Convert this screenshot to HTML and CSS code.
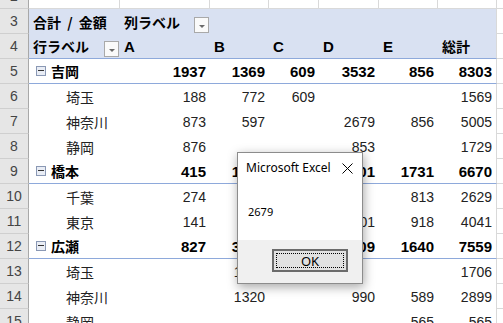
FILE: index.html
```
<!DOCTYPE html>
<html lang="ja">
<head>
  <meta charset="UTF-8">
  <title>ピボットテーブル</title>
  <link rel="stylesheet" href="styles.css">
</head>
<body>

<div class="sheet">
  <!-- 2 -->
  <div class="rh">2</div>
  <div class="gl"></div><div class="gl"></div><div class="gl"></div><div class="gl"></div>
  <div class="gl"></div><div class="gl"></div><div class="gl"></div><div class="gl last"></div>

  <!-- 3 -->
  <div class="rh">3</div>
  <div class="hd bold wide">合計 / 金額</div>
  <div class="hd bold split">列ラベル<span class="dd"></span></div>
  <div class="hd"></div><div class="hd"></div><div class="hd"></div><div class="hd"></div><div class="hd"></div>
  <div class="gl last"></div>

  <!-- 4 -->
  <div class="rh">4</div>
  <div class="hd bold line split">行ラベル<span class="dd"></span></div>
  <div class="hd head line">A</div>
  <div class="hd head line">B</div>
  <div class="hd head line">C</div>
  <div class="hd head line">D</div>
  <div class="hd head line">E</div>
  <div class="hd bold line">総計</div>
  <div class="gl last"></div>

  <!-- 5 -->
  <div class="rh">5</div>
  <div class="grp"><span class="minus"></span>吉岡</div>
  <div class="grp num">1937</div><div class="grp num">1369</div><div class="grp num">609</div>
  <div class="grp num">3532</div><div class="grp num">856</div><div class="grp num">8303</div>
  <div class="gl last"></div>

  <!-- 6 -->
  <div class="rh">6</div>
  <div class="item">埼玉</div>
  <div class="num">188</div><div class="num">772</div><div class="num">609</div>
  <div class="num"></div><div class="num"></div><div class="num">1569</div>
  <div class="gl last"></div>

  <!-- 7 -->
  <div class="rh">7</div>
  <div class="item">神奈川</div>
  <div class="num">873</div><div class="num">597</div><div class="num"></div>
  <div class="num">2679</div><div class="num">856</div><div class="num">5005</div>
  <div class="gl last"></div>

  <!-- 8 -->
  <div class="rh">8</div>
  <div class="item">静岡</div>
  <div class="num">876</div><div class="num"></div><div class="num"></div>
  <div class="num">853</div><div class="num"></div><div class="num">1729</div>
  <div class="gl last"></div>

  <!-- 9 -->
  <div class="rh">9</div>
  <div class="grp"><span class="minus"></span>橋本</div>
  <div class="grp num">415</div><div class="grp num">1323</div><div class="grp num">700</div>
  <div class="grp num">2501</div><div class="grp num">1731</div><div class="grp num">6670</div>
  <div class="gl last"></div>

  <!-- 10 -->
  <div class="rh">10</div>
  <div class="item">千葉</div>
  <div class="num">274</div><div class="num">842</div><div class="num">700</div>
  <div class="num"></div><div class="num">813</div><div class="num">2629</div>
  <div class="gl last"></div>

  <!-- 11 -->
  <div class="rh">11</div>
  <div class="item">東京</div>
  <div class="num">141</div><div class="num">481</div><div class="num"></div>
  <div class="num">2501</div><div class="num">918</div><div class="num">4041</div>
  <div class="gl last"></div>

  <!-- 12 -->
  <div class="rh">12</div>
  <div class="grp"><span class="minus"></span>広瀬</div>
  <div class="grp num">827</div><div class="grp num">3026</div><div class="grp num">357</div>
  <div class="grp num">1709</div><div class="grp num">1640</div><div class="grp num">7559</div>
  <div class="gl last"></div>

  <!-- 13 -->
  <div class="rh">13</div>
  <div class="item">埼玉</div>
  <div class="num"></div><div class="num">1706</div><div class="num"></div>
  <div class="num"></div><div class="num"></div><div class="num">1706</div>
  <div class="gl last"></div>

  <!-- 14 -->
  <div class="rh">14</div>
  <div class="item">神奈川</div>
  <div class="num"></div><div class="num">1320</div><div class="num"></div>
  <div class="num">990</div><div class="num">589</div><div class="num">2899</div>
  <div class="gl last"></div>

  <!-- 15 -->
  <div class="rh">15</div>
  <div class="item">静岡</div>
  <div class="num"></div><div class="num"></div><div class="num"></div>
  <div class="num"></div><div class="num">565</div><div class="num">565</div>
  <div class="gl last"></div>
</div>

<div class="msgbox">
  <div class="msg-title">
    <span>Microsoft Excel</span>
    <svg class="msg-close" width="11" height="11" viewBox="0 0 11 11">
      <path d="M0.5 0.5 L10.5 10.5 M10.5 0.5 L0.5 10.5" stroke="#000" stroke-width="1" fill="none"/>
    </svg>
  </div>
  <div class="msg-body">2679</div>
  <div class="msg-foot">
    <button class="msg-ok"><span>OK</span></button>
  </div>
</div>

</body>
</html>
```

FILE: styles.css
```
html, body {
  margin: 0;
  padding: 0;
  background: #ffffff;
  overflow: hidden;
  font-family: "Noto Sans CJK JP", "Liberation Sans", sans-serif;
}

.sheet {
  display: grid;
  grid-template-columns: 29px 91px 90px 59px 50px 60px 59px 59px 1fr;
  grid-auto-rows: 25px;
  margin-top: -16px;
  font-size: 14px;
  color: #222;
}
.sheet > div {
  box-sizing: border-box;
  display: flex;
  align-items: center;
  white-space: pre;
  overflow: hidden;
}

/* 行番号 */
.rh {
  justify-content: center;
  background: #e6e6e6;
  color: #444;
  border-right: 1px solid #a8a8a8;
  border-bottom: 1px solid #cfcfcf;
  font-family: "Liberation Sans", sans-serif;
  font-size: 14px;
}

/* 普通のセル線 */
.gl {
  border-right: 1px solid #d9d9d9;
  border-bottom: 1px solid #d9d9d9;
}
.gl.last { border-right: none; }
.sheet > div:nth-child(9n+8) { border-right: 1px solid #d9d9d9; }

/* ピボットの見出し */
.hd {
  background: #d9e1f2;
  padding-left: 4px;
  color: #000;
}
.bold { font-weight: bold; }
.wide { word-spacing: 3px; }
.head {
  font-family: "Liberation Sans", sans-serif;
  font-weight: bold;
  font-size: 15px;
}
.line { border-bottom: 1px solid #8ea9db; }
.split {
  justify-content: space-between;
  padding-right: 1px;
}
.dd {
  align-self: flex-end;
  margin-bottom: 1px;
  width: 15px;
  height: 16px;
  box-sizing: border-box;
  background: #fafafa;
  border: 1px solid #a9a9a9;
  position: relative;
}
.dd::after {
  content: "";
  position: absolute;
  left: 4px;
  top: 7px;
  border-left: 3px solid transparent;
  border-right: 3px solid transparent;
  border-top: 3px solid #6a6a6a;
}

/* グループ行 */
.grp {
  font-weight: bold;
  color: #000;
  border-bottom: 1px solid #8ea9db;
}
.grp:not(.num) { padding-left: 7px; }
.grp.num {
  font-family: "Liberation Sans", sans-serif;
  font-size: 15px;
}
.minus {
  width: 10px;
  height: 10px;
  box-sizing: border-box;
  border: 1px solid #8a98b4;
  background: #e9edf5;
  margin-right: 5px;
  position: relative;
}
.minus::after {
  content: "";
  position: absolute;
  left: 1px;
  top: 3px;
  width: 6px;
  height: 1px;
  background: #333;
}

.item { padding-left: 37px; }
.num {
  justify-content: flex-end;
  padding-right: 4px;
  font-family: "Liberation Sans", sans-serif;
}

/* メッセージボックス */
.msgbox {
  position: absolute;
  left: 237px;
  top: 152px;
  width: 126px;
  height: 132px;
  box-sizing: border-box;
  background: #ffffff;
  border: 1px solid #8c8c8c;
  box-shadow: 1px 3px 10px rgba(0, 0, 0, 0.35);
  display: flex;
  flex-direction: column;
  font-family: "Noto Sans", sans-serif;
}
.msg-title {
  height: 29px;
  display: flex;
  align-items: center;
  justify-content: space-between;
  padding: 0 9px 0 8px;
  font-size: 12px;
  color: #000;
}
.msg-close { margin-top: 1px; }
.msg-body {
  height: 58px;
  display: flex;
  align-items: center;
  padding-left: 10px;
  font-size: 11px;
  color: #000;
}
.msg-foot {
  flex: 1;
  background: #f0f0f0;
  display: flex;
  justify-content: flex-end;
  align-items: flex-start;
  padding: 9px 14px 0 0;
}
.msg-ok {
  width: 76px;
  height: 23px;
  padding: 2px;
  margin: 0;
  box-sizing: border-box;
  border: 2px solid #6b6b6b;
  background: #e1e1e1;
  font-family: "Noto Sans", sans-serif;
  font-size: 13px;
  color: #000;
}
.msg-ok span {
  display: flex;
  align-items: center;
  justify-content: center;
  height: 100%;
  border: 1px dotted #000;
  box-sizing: border-box;
}
```
